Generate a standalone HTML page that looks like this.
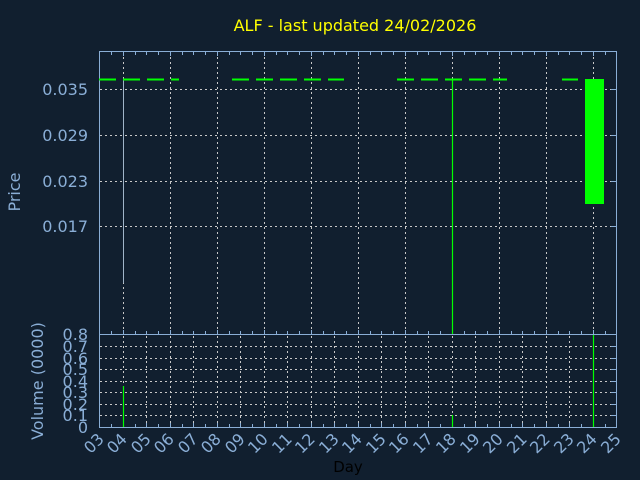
<!DOCTYPE html>
<html><head><meta charset="utf-8"><style>
html,body{margin:0;padding:0;background:#111f2f;width:640px;height:480px;overflow:hidden}
svg{display:block}
text{font-family:"DejaVu Sans","Liberation Sans",sans-serif;fill:#8aaed6}
</style></head><body>
<svg width="640" height="480" viewBox="0 0 640 480">
<rect width="640" height="480" fill="#111f2f"/>
<text x="355" y="31" text-anchor="middle" font-size="16" style="fill:#ffff00">ALF - last updated 24/02/2026</text>
<g stroke="#c8c8c8" stroke-width="1" stroke-dasharray="2,3" fill="none">
<path d="M100 89.5H616M100 135.5H616M100 181.5H616M100 226.5H616"/>
<path d="M123.5 52V334M170.5 52V334M217.5 52V334M264.5 52V334M311.5 52V334M358.5 52V334M405.5 52V334M452.5 52V334M499.5 52V334M546.5 52V334M593.5 52V334"/>
<path d="M100 346.5H616M100 358.5H616M100 369.5H616M100 381.5H616M100 392.5H616M100 404.5H616M100 415.5H616"/>
<path d="M123.5 336V427M146.5 336V427M170.5 336V427M193.5 336V427M217.5 336V427M240.5 336V427M264.5 336V427M287.5 336V427M311.5 336V427M334.5 336V427M358.5 336V427M381.5 336V427M405.5 336V427M428.5 336V427M452.5 336V427M475.5 336V427M499.5 336V427M522.5 336V427M546.5 336V427M569.5 336V427"/>
</g>
<g stroke="#8aaed6" stroke-width="1" fill="none">
<rect x="99.5" y="51.5" width="517" height="283"/>
<rect x="99.5" y="334.5" width="517" height="93"/>
<path d="M611 89.5H616M611 135.5H616M611 181.5H616M611 226.5H616"/>
<path d="M611 346.5H616M611 358.5H616M611 369.5H616M611 381.5H616M611 392.5H616M611 404.5H616M611 415.5H616"/>
<path d="M111.5 52v3M123.5 52v4M135.5 52v3M146.5 52v3M158.5 52v3M170.5 52v4M182.5 52v3M193.5 52v3M205.5 52v3M217.5 52v4M229.5 52v3M240.5 52v3M252.5 52v3M264.5 52v4M276.5 52v3M287.5 52v3M299.5 52v3M311.5 52v4M323.5 52v3M334.5 52v3M346.5 52v3M358.5 52v4M370.5 52v3M381.5 52v3M393.5 52v3M405.5 52v4M417.5 52v3M428.5 52v3M440.5 52v3M452.5 52v4M464.5 52v3M475.5 52v3M487.5 52v3M499.5 52v4M511.5 52v3M522.5 52v3M534.5 52v3M546.5 52v4M558.5 52v3M569.5 52v3M581.5 52v3M593.5 52v4M605.5 52v3"/>
<path d="M111.5 331v3M123.5 330v4M135.5 331v3M146.5 331v3M158.5 331v3M170.5 330v4M182.5 331v3M193.5 331v3M205.5 331v3M217.5 330v4M229.5 331v3M240.5 331v3M252.5 331v3M264.5 330v4M276.5 331v3M287.5 331v3M299.5 331v3M311.5 330v4M323.5 331v3M334.5 331v3M346.5 331v3M358.5 330v4M370.5 331v3M381.5 331v3M393.5 331v3M405.5 330v4M417.5 331v3M428.5 331v3M440.5 331v3M452.5 330v4M464.5 331v3M475.5 331v3M487.5 331v3M499.5 330v4M511.5 331v3M522.5 331v3M534.5 331v3M546.5 330v4M558.5 331v3M569.5 331v3M581.5 331v3M593.5 330v4M605.5 331v3"/>
<path d="M111.5 424v3M123.5 423v4M135.5 424v3M146.5 423v4M158.5 424v3M170.5 423v4M182.5 424v3M193.5 423v4M205.5 424v3M217.5 423v4M229.5 424v3M240.5 423v4M252.5 424v3M264.5 423v4M276.5 424v3M287.5 423v4M299.5 424v3M311.5 423v4M323.5 424v3M334.5 423v4M346.5 424v3M358.5 423v4M370.5 424v3M381.5 423v4M393.5 424v3M405.5 423v4M417.5 424v3M428.5 423v4M440.5 424v3M452.5 423v4M464.5 424v3M475.5 423v4M487.5 424v3M499.5 423v4M511.5 424v3M522.5 423v4M534.5 424v3M546.5 423v4M558.5 424v3M569.5 423v4M581.5 424v3M593.5 423v4M605.5 424v3"/>
<path d="M123.5 79V283" stroke="#a0b4c8"/>
</g>
<g stroke="#00ff00" fill="none">
<path d="M99 79.5H179M232 79.5H344M397 79.5H507M562 79.5H578" stroke-width="2" stroke-dasharray="17,7"/>
<path d="M452.5 79V334M452.5 415V427M123.5 386V427M593.5 335V427" stroke-width="1.2"/>
</g>
<rect x="585" y="79" width="19" height="125" fill="#00ff00"/>
<g font-size="16" text-anchor="end">
<text x="88" y="95">0.035</text>
<text x="88" y="141">0.029</text>
<text x="88" y="187">0.023</text>
<text x="88" y="232">0.017</text>
</g>
<g font-size="16" text-anchor="end">
<text x="88" y="340">0.8</text><text x="88" y="352">0.7</text><text x="88" y="364">0.6</text><text x="88" y="375">0.5</text><text x="88" y="387">0.4</text><text x="88" y="398">0.3</text><text x="88" y="410">0.2</text><text x="88" y="421">0.1</text><text x="88" y="433">0</text>
</g>
<text font-size="16" transform="translate(20,192) rotate(-90)" text-anchor="middle">Price</text>
<text font-size="16" transform="translate(43,381) rotate(-90)" text-anchor="middle">Volume (0000)</text>
<text x="348" y="472" font-size="15" text-anchor="middle" style="fill:#000">Day</text>
<g font-size="16" text-anchor="end">
<text transform="translate(105,440) rotate(-45)">03</text>
<text transform="translate(128,440) rotate(-45)">04</text>
<text transform="translate(152,440) rotate(-45)">05</text>
<text transform="translate(175,440) rotate(-45)">06</text>
<text transform="translate(199,440) rotate(-45)">07</text>
<text transform="translate(222,440) rotate(-45)">08</text>
<text transform="translate(246,440) rotate(-45)">09</text>
<text transform="translate(269,440) rotate(-45)">10</text>
<text transform="translate(293,440) rotate(-45)">11</text>
<text transform="translate(316,440) rotate(-45)">12</text>
<text transform="translate(340,440) rotate(-45)">13</text>
<text transform="translate(363,440) rotate(-45)">14</text>
<text transform="translate(387,440) rotate(-45)">15</text>
<text transform="translate(410,440) rotate(-45)">16</text>
<text transform="translate(434,440) rotate(-45)">17</text>
<text transform="translate(457,440) rotate(-45)">18</text>
<text transform="translate(481,440) rotate(-45)">19</text>
<text transform="translate(504,440) rotate(-45)">20</text>
<text transform="translate(528,440) rotate(-45)">21</text>
<text transform="translate(551,440) rotate(-45)">22</text>
<text transform="translate(575,440) rotate(-45)">23</text>
<text transform="translate(598,440) rotate(-45)">24</text>
<text transform="translate(622,440) rotate(-45)">25</text>
</g>
</svg>
</body></html>
